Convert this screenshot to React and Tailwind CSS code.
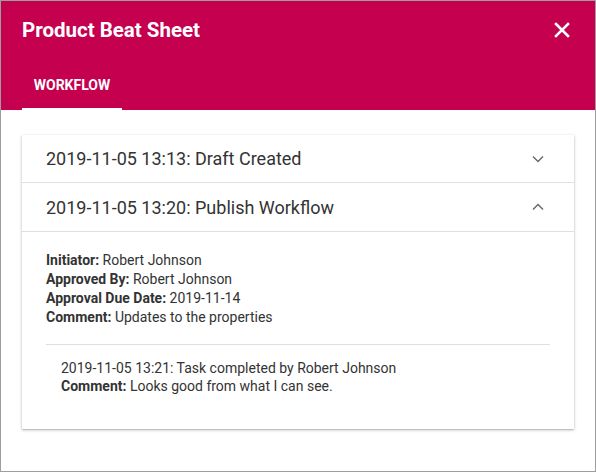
export default function App() {
  return (
    <div className="w-[596px] h-[472px] border border-[#9e9e9e] bg-white flex flex-col overflow-hidden" style={{ fontFamily: "Roboto, 'Noto Sans', sans-serif" }}>
      <div className="bg-[#c4004f] h-[109px] flex flex-col">
        <div className="flex items-center justify-between pl-[21px] pr-[25px] pt-[8px] h-[50px]">
          <h1 className="text-white text-[20.5px] font-bold leading-[24px]">Product Beat Sheet</h1>
          <svg width="16" height="16" viewBox="0 0 16 16">
            <path d="M2 2 L14 14 M14 2 L2 14" stroke="white" strokeWidth="2.6" strokeLinecap="square" />
          </svg>
        </div>
        <div className="flex flex-1 items-end pl-[21px]">
          <div className="w-[100px] h-[59px] flex flex-col">
            <div className="flex-1 flex items-center justify-center text-white text-[14px] font-bold leading-none pt-[11px]">WORKFLOW</div>
            <div className="h-[2px] bg-white" />
          </div>
        </div>
      </div>
      <div className="px-[21px] pt-[25px]">
        <div className="bg-white shadow-[0_1px_3px_rgba(0,0,0,0.25),0_1px_1px_rgba(0,0,0,0.1)]">
          <div className="h-[48px] flex items-center justify-between pl-[24px] pr-[30px] border-b border-[#e0e0e0]">
            <span className="text-[18px] text-[#333333]">2019-11-05 13:13: Draft Created</span>
            <svg width="12" height="8" viewBox="0 0 12 8">
              <path d="M1 1.5 L6 6.5 L11 1.5" fill="none" stroke="#6b6b6b" strokeWidth="1.5" />
            </svg>
          </div>
          <div className="h-[49px] flex items-center justify-between pl-[24px] pr-[30px] border-b border-[#e0e0e0]">
            <span className="text-[18px] text-[#333333]">2019-11-05 13:20: Publish Workflow</span>
            <svg width="12" height="8" viewBox="0 0 12 8">
              <path d="M1 6.5 L6 1.5 L11 6.5" fill="none" stroke="#6b6b6b" strokeWidth="1.5" />
            </svg>
          </div>
          <div className="px-[24px] pt-[19px] pb-[34px] text-[14px] leading-[19px] text-[#333333]">
            <div><span className="font-bold">Initiator:</span> Robert Johnson</div>
            <div><span className="font-bold">Approved By:</span> Robert Johnson</div>
            <div><span className="font-bold">Approval Due Date:</span> 2019-11-14</div>
            <div><span className="font-bold">Comment:</span> Updates to the properties</div>
            <div className="mt-[17px] border-t border-[#e0e0e0] pt-[14px] pl-[15px] leading-[18px]">
              <div>2019-11-05 13:21: Task completed by Robert Johnson</div>
              <div><span className="font-bold">Comment:</span> Looks good from what I can see.</div>
            </div>
          </div>
        </div>
      </div>
    </div>
  );
}
